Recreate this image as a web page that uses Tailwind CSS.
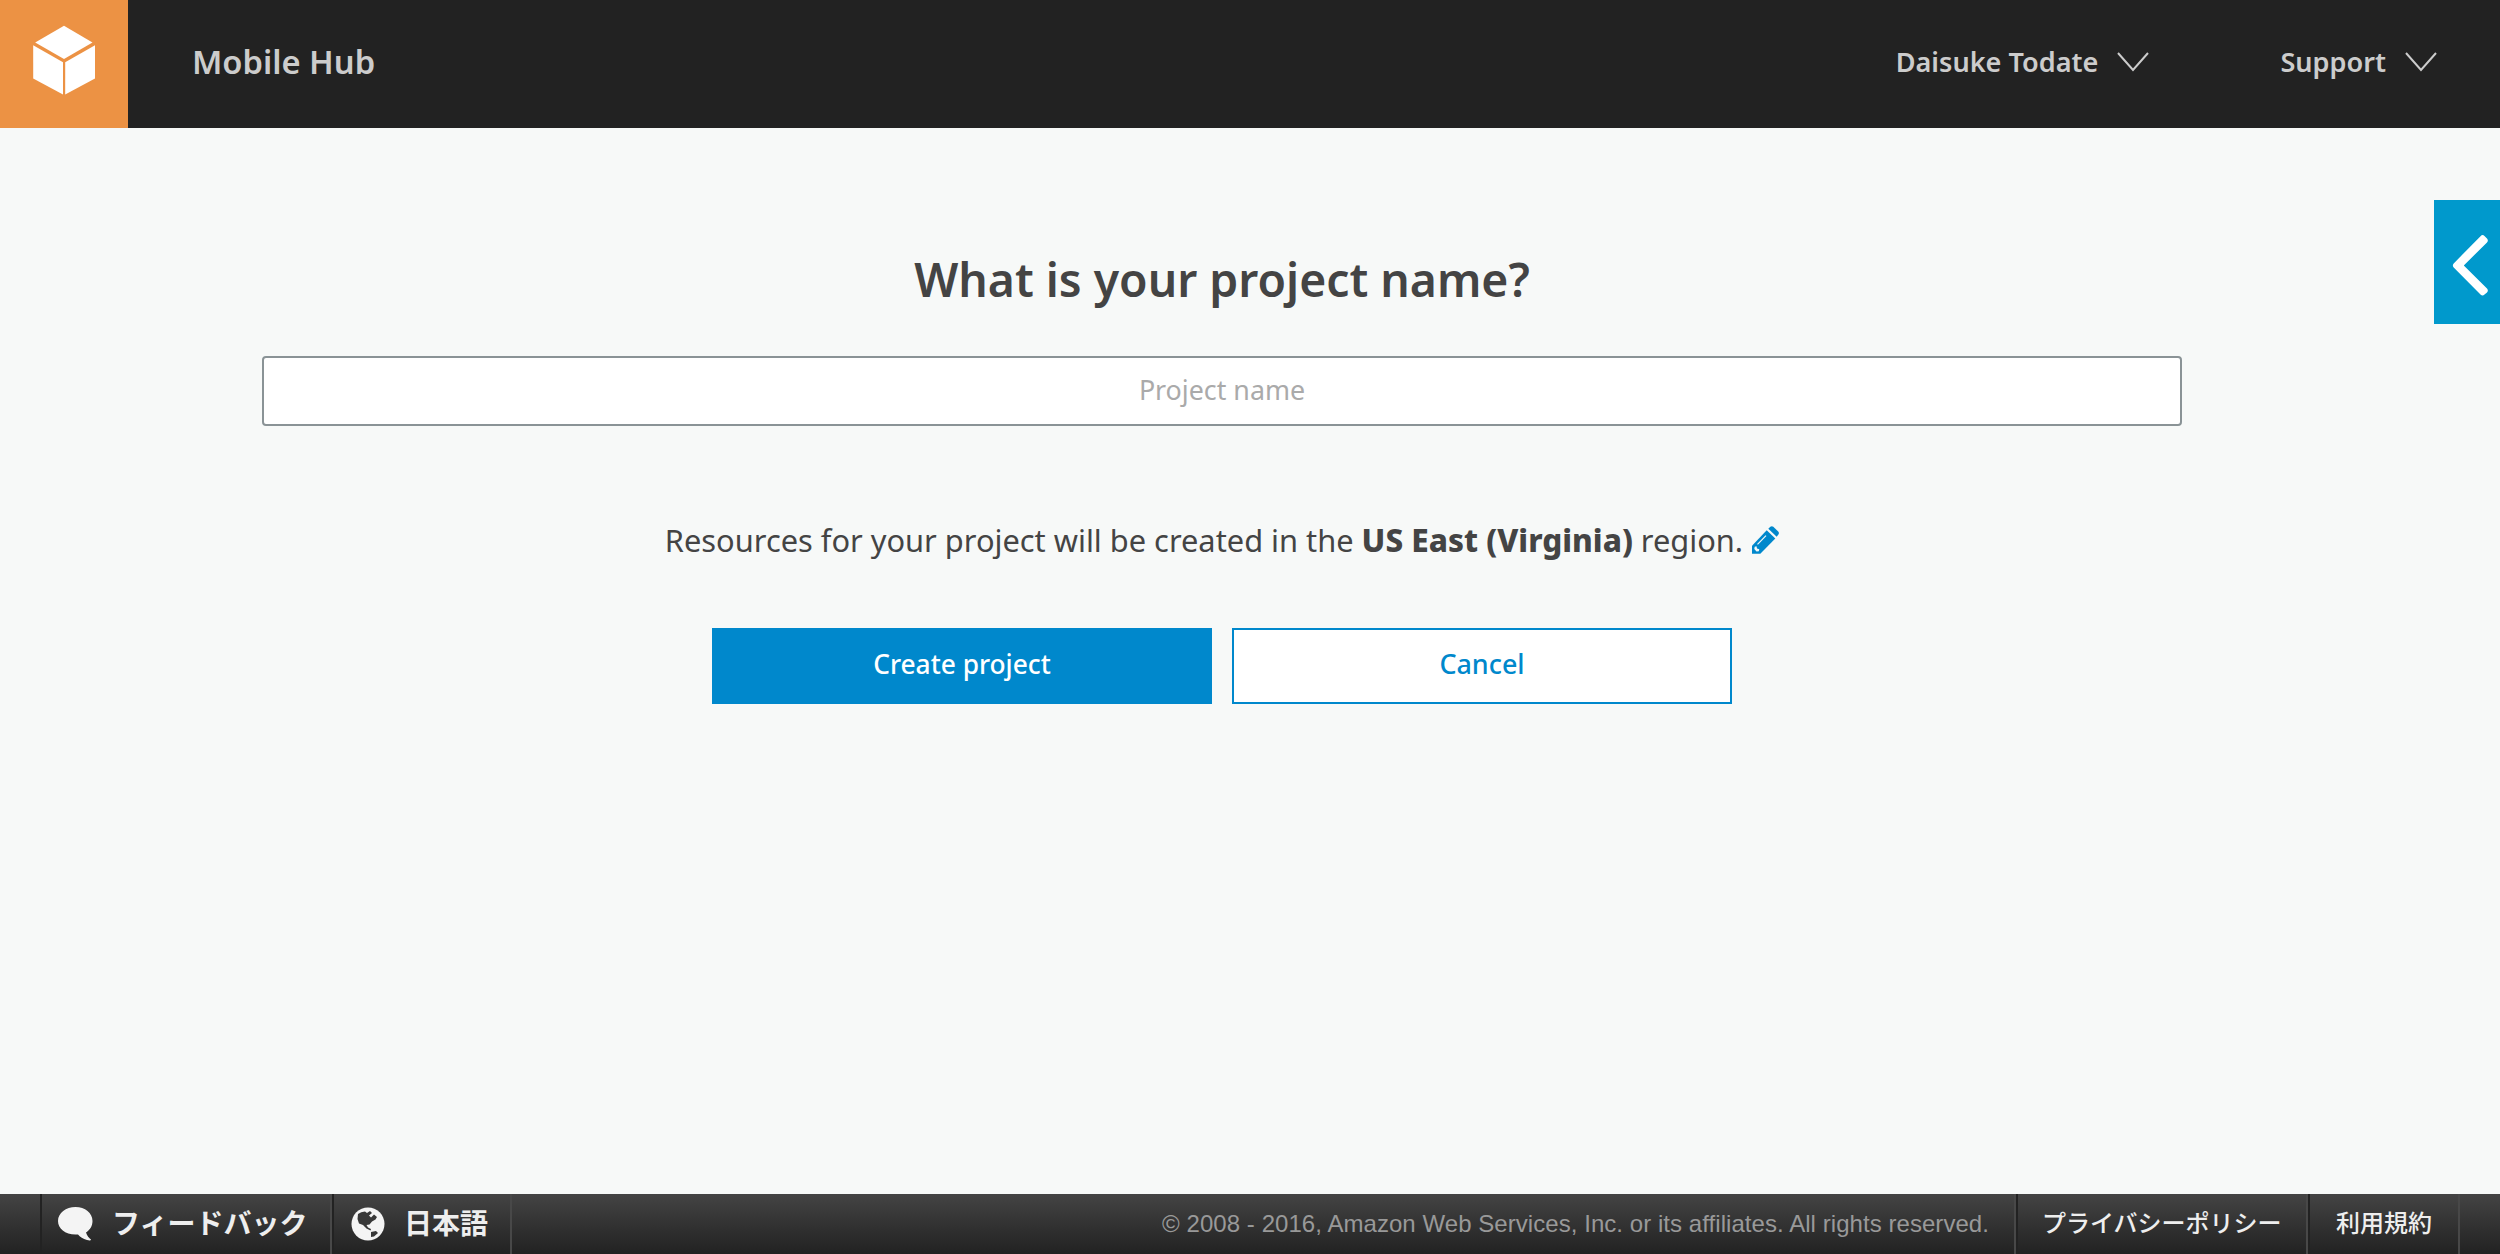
<!DOCTYPE html>
<html lang="ja">
<head>
<meta charset="utf-8">
<title>Mobile Hub</title>
<script src="https://cdn.jsdelivr.net/npm/@tailwindcss/browser@4"></script>
</head>
<body class="relative flex h-[1254px] w-[2500px] flex-col overflow-hidden bg-[#f7f9f8] font-['Noto_Sans','Noto_Sans_CJK_JP',sans-serif] text-[#444]">
  <header class="flex h-32 shrink-0 bg-[#222] font-semibold text-[#ccc]">
    <a class="block size-32 bg-[#ec9244]">
      <svg class="size-32" viewBox="0 0 128 128" fill="#fff"><path d="M64 25.7 92.5 42.5 64 59 35.2 42.5z"/><path d="M33.2 45.3 63 62.3V94.5L33.2 78.6z"/><path d="M95 45.3 65.2 62.3V94.5L95 78.6z"/></svg>
    </a>
    <div class="ml-16 flex h-[124px] items-center text-[32.7px]">Mobile Hub</div>
    <nav class="mr-[63px] ml-auto flex h-[124px] items-center text-[27.1px]">
      <div class="flex items-center gap-[19px]">Daisuke Todate
        <svg class="h-5 w-8" viewBox="0 0 32 20" fill="none" stroke="#ccc" stroke-width="2"><path d="M1 1 16 18 31 1"/></svg>
      </div>
      <div class="ml-[131px] flex items-center gap-[19px]">Support
        <svg class="h-5 w-8" viewBox="0 0 32 20" fill="none" stroke="#ccc" stroke-width="2"><path d="M1 1 16 18 31 1"/></svg>
      </div>
    </nav>
  </header>

  <main class="mr-14 flex grow flex-col items-center pt-[121px]">
    <h1 class="text-[46.3px] leading-[61px] font-semibold">What is your project name?</h1>
    <input type="text" placeholder="Project name" class="mt-[46px] h-[70px] w-[1920px] rounded border-2 border-[#8a9396] bg-white pb-[3px] text-center text-[26.8px] placeholder:text-[#aaa] placeholder:opacity-100">
    <p class="mt-[94px] flex h-10 items-center text-[30.8px] leading-10 whitespace-pre"><span>Resources for your project will be created in the </span><b class="text-[31.5px] font-extrabold">US East (Virginia)</b><span> region.</span><svg class="ml-[9px] h-7 w-[27px]" viewBox="0 0 27 28"><path fill="#08c" d="M14.700 4.300 23.300 12.500 8.300 27.700H0V19.700z"/><path fill="#08c" d="M16.300 2.700 18.300.8Q19.800-.4 21.300.8L26.200 5.500Q27.500 7 26.400 8.500L24.700 10.800z"/><path d="M5.500 18.300 14 9.700" stroke="#f7f9f8" stroke-width="1.200"/><path fill="#f7f9f8" d="M2.700 20.700 4.500 20.300 5 22.500 7.300 23.300 6.800 25.200 4.500 25.400 2.300 23z"/></svg></p>
    <div class="mt-[68px] flex gap-5">
      <button class="h-[76px] w-[500px] bg-[#08c] pb-[3px] text-[26.3px] font-medium text-white">Create project</button>
      <button class="h-[76px] w-[500px] border-2 border-[#08c] bg-white pb-[3px] text-[26.9px] font-medium text-[#08c]">Cancel</button>
    </div>
  </main>

  <aside class="absolute top-[200px] right-0 h-31 w-[66px] bg-[#09c]">
    <svg class="h-31 w-[66px]" viewBox="0 0 66 124" fill="#fff"><path d="M46.500 36.200Q48.500 34 50.500 36L53 38.500Q54.700 40.500 53 42.400L29.800 65.500 53 88.500Q54.700 90.500 53 92.400L50.500 94.600Q48.500 96.500 46.500 94.500L19.700 67.400Q18 65.500 19.700 63.400z"/></svg>
  </aside>

  <footer class="flex h-15 shrink-0 bg-linear-to-b from-[#444] to-[#222] text-[#eee]">
    <div class="ml-10 flex w-[292px] items-center border-l-2 border-l-[#222] pl-4 text-[28px] font-bold">
      <svg class="h-[34px] w-[35px] shrink-0" viewBox="0 0 35 34" fill="#f4f4f4"><path d="M17.500 0C27 0 34.500 6 34.500 14 34.500 19 32 23 28 25.500 29 29 31 31 33 32.500 32.500 34 31 33.500 29 33 25 32 22 30 20 27.500 8 28.500 0 22 0 14 0 6 8 0 17.500 0z"/></svg>
      <span class="ml-[19px] pb-0.5">フィードバック</span>
    </div>
    <div class="-ml-0.5 flex w-[182px] items-center border-x-2 border-x-[#484848] text-[28px] font-bold">
      <div class="flex h-15 items-center border-l-2 border-[#222] pl-[17px]">
      <svg class="size-[34px] shrink-0" viewBox="0 0 34 34"><circle cx="17" cy="17" r="16.500" fill="#f4f4f4"/><path d="M7 7Q10 4.500 14 4.500L16 6 19 4 21 6 18 8.500 20 10.500 23 7.500 26 10 24.500 12.500 21 14.500 18.500 17.500 15.500 18 17 20.500 20 22 19.500 23.500 15.500 21.500 12 18 8 16.500 6.500 12zM20 25 25 24 27 26 23 29.500 20 30z" fill="#383838"/></svg>
      <span class="ml-[19px] pb-0.5">日本語</span>
      </div>
    </div>
    <div class="ml-auto flex items-center pr-[25px] font-['Liberation_Sans',sans-serif] text-[24px] tracking-[0.055px] text-[#999]">© 2008 - 2016, Amazon Web Services, Inc. or its affiliates. All rights reserved.</div>
    <div class="flex w-[292px] border-l-2 border-[#484848] text-[24px] font-medium"><div class="flex items-center border-l-2 border-[#222] pb-0.5 pl-[24px]">プライバシーポリシー</div></div>
    <div class="mr-10 flex w-[154px] border-x-2 border-[#484848] text-[24px] font-medium"><div class="flex items-center border-l-2 border-[#222] pb-0.5 pl-[26px]">利用規約</div></div>
  </footer>
</body>
</html>
